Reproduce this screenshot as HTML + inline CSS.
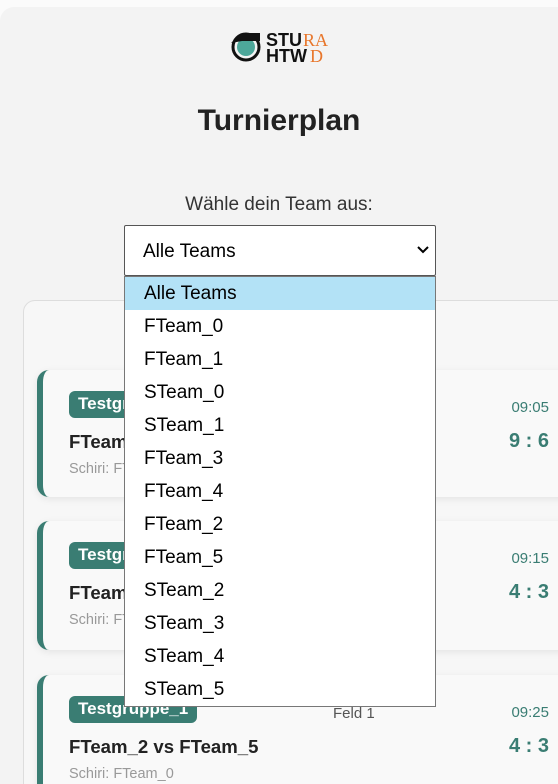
<!DOCTYPE html>
<html><head><meta charset="utf-8"><style>
*{box-sizing:border-box;margin:0;padding:0}
html,body{width:558px;height:784px;overflow:hidden}
body{background:#fbfbfb;font-family:"Liberation Sans",Arial,sans-serif;position:relative}
.page{position:absolute;left:0;top:7px;width:580px;height:800px;background:#f3f3f3;border-radius:14px}
.logo{position:absolute;left:229px;top:28px;width:104px;height:36px}
h1{position:absolute;top:104px;left:0;width:558px;text-align:center;font-size:30px;font-weight:bold;color:#222}
.lbl{position:absolute;top:194px;left:0;width:558px;text-align:center;font-size:19px;color:#333}
.sel{position:absolute;left:124px;top:225px;width:312px;height:51px;border:1px solid #555;border-radius:2px;background:#fff;font-size:19px;color:#000;padding:15px 0 0 18px}
.sel svg{position:absolute;right:6px;top:20px}
.inner{position:absolute;left:23px;top:300px;width:560px;height:520px;border:1px solid #ddd;border-radius:12px;background:#f7f7f7}
.card{position:absolute;left:37px;width:540px;background:#f9f9f9;border-left:6px solid #3a7d73;border-radius:12px;box-shadow:0 2px 8px rgba(0,0,0,.08)}
.badge{position:absolute;left:26px;top:21px;background:#3a7d73;color:#fff;font-weight:bold;font-size:17px;padding:3px 9px 4px;border-radius:6px}
.title{position:absolute;left:26px;top:61px;font-size:18.6px;font-weight:bold;color:#222}
.schiri{position:absolute;left:26px;top:91px;font-size:14.5px;color:#999}
.feld{position:absolute;left:290px;top:30px;font-size:15px;color:#555}
.time{position:absolute;right:28px;top:29px;font-size:15px;color:#3a7d73}
.score{position:absolute;right:28px;top:60px;font-size:20px;font-weight:bold;color:#3a7d73}
.list{position:absolute;left:124px;top:276px;width:312px;height:431px;background:#fff;border:1px solid #777;font-size:19px;color:#000}
.list div{height:33px;line-height:34px;padding-left:19px}
.list .hi{background:#b3e2f6}
</style></head><body>
<div class="page"></div>
<svg class="logo" viewBox="0 0 104 36">
<circle cx="17" cy="19" r="13" fill="none" stroke="#111" stroke-width="3"/>
<circle cx="17" cy="19" r="9" fill="#4da79a"/>
<path d="M2 15 L13 5 L31 5 L31 13 L13 13 Z" fill="#111"/>
<text x="37" y="18" font-family="Liberation Sans" font-weight="bold" font-size="18" fill="#111">STU</text>
<text x="74" y="18" font-family="Liberation Serif" font-size="18" fill="#e8762b">RA</text>
<text x="37" y="34" font-family="Liberation Sans" font-weight="bold" font-size="18" fill="#111">HTW</text>
<text x="81" y="34" font-family="Liberation Serif" font-size="18" fill="#e8762b">D</text>
</svg>
<h1>Turnierplan</h1>
<div class="lbl">Wähle dein Team aus:</div>
<div class="sel">Alle Teams<svg width="12" height="8" viewBox="0 0 12 8"><path d="M1 1 L6 6 L11 1" fill="none" stroke="#000" stroke-width="2"/></svg></div>
<div class="inner"></div>
<div class="card" style="top:370px;height:127px"><span class="badge">Testgruppe_1</span><span class="feld">Feld 1</span><span class="time">09:05</span><div class="title">FTeam_0 vs FTeam_1</div><div class="score">9 : 6</div><div class="schiri">Schiri: FTeam_2</div></div>
<div class="card" style="top:521px;height:129px"><span class="badge">Testgruppe_1</span><span class="feld">Feld 1</span><span class="time">09:15</span><div class="title">FTeam_3 vs FTeam_4</div><div class="score">4 : 3</div><div class="schiri">Schiri: FTeam_1</div></div>
<div class="card" style="top:675px;height:129px"><span class="badge">Testgruppe_1</span><span class="feld">Feld 1</span><span class="time">09:25</span><div class="title">FTeam_2 vs FTeam_5</div><div class="score">4 : 3</div><div class="schiri">Schiri: FTeam_0</div></div>
<div class="list">
<div class="hi">Alle Teams</div><div>FTeam_0</div><div>FTeam_1</div><div>STeam_0</div><div>STeam_1</div><div>FTeam_3</div><div>FTeam_4</div><div>FTeam_2</div><div>FTeam_5</div><div>STeam_2</div><div>STeam_3</div><div>STeam_4</div><div>STeam_5</div>
</div>
</body></html>
